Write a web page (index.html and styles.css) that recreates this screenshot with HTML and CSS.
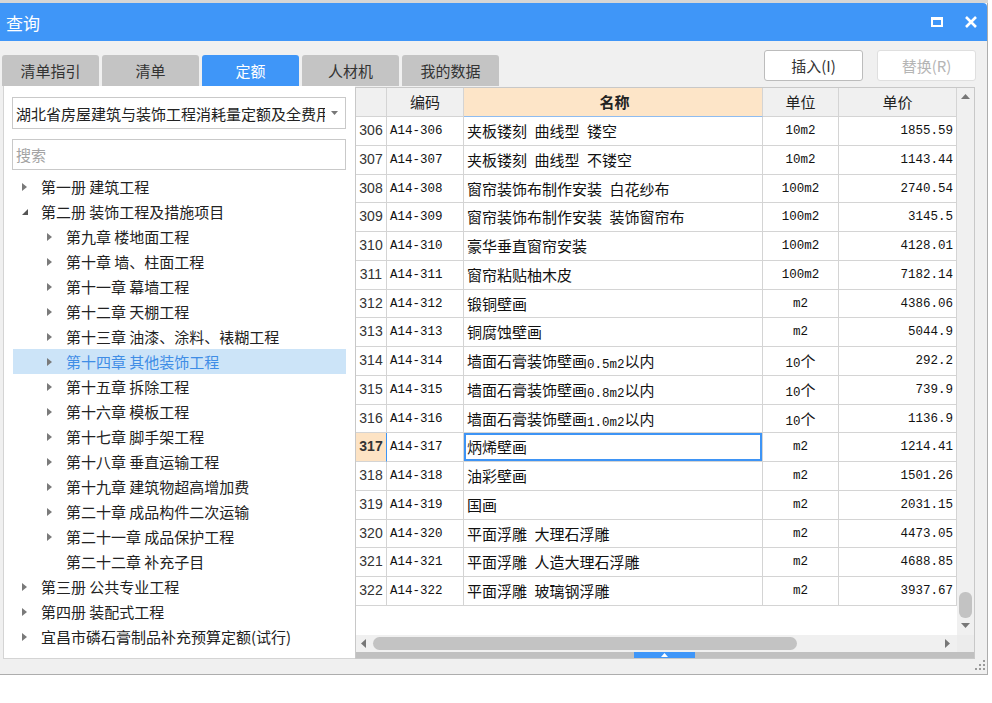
FILE: index.html
```html
<!DOCTYPE html>
<html lang="zh-CN">
<head>
<meta charset="utf-8">
<title>查询</title>
<link rel="stylesheet" href="styles.css">
</head>
<body>
<div class="topstrip"></div>
<div class="dialog">
  <div class="titlebar">
    <span class="title">查询</span>
    <div class="tb-icons">
      <svg width="12" height="10" viewBox="0 0 12 10"><rect x="1" y="1.5" width="10" height="7.5" fill="none" stroke="#fff" stroke-width="2"/><rect x="0" y="0" width="12" height="3" fill="#fff"/></svg>
      <svg width="12" height="12" viewBox="0 0 12 12"><path d="M1 1L11 11M11 1L1 11" stroke="#fff" stroke-width="2.6"/></svg>
    </div>
  </div>
  <div class="body">
    <div class="toprow">
      <div class="tabs">
        <div class="tab">清单指引</div>
        <div class="tab">清单</div>
        <div class="tab active">定额</div>
        <div class="tab">人材机</div>
        <div class="tab">我的数据</div>
      </div>
      <div class="btns">
        <button class="btn">插入(I)</button>
        <button class="btn disabled">替换(R)</button>
      </div>
    </div>
    <div class="content">
      <div class="left">
        <div class="combo">
          <span class="combo-text">湖北省房屋建筑与装饰工程消耗量定额及全费用基价表</span>
          <svg class="combo-arr" width="7" height="4" viewBox="0 0 7 4"><path d="M0 0H7L3.5 4Z" fill="#777"/></svg>
        </div>
        <div class="search">搜索</div>
        <div class="tree">
          <div class="row l0"><span class="arr"><svg width="5" height="8" viewBox="0 0 5 8"><path d="M0 0L5 4L0 8Z" fill="#7a7a7a"/></svg></span>第一册 建筑工程</div>
          <div class="row l0"><span class="arr"><svg width="6" height="6" viewBox="0 0 6 6"><path d="M6 0V6H0Z" fill="#555"/></svg></span>第二册 装饰工程及措施项目</div>
          <div class="row l1"><span class="arr"><svg width="5" height="8" viewBox="0 0 5 8"><path d="M0 0L5 4L0 8Z" fill="#7a7a7a"/></svg></span>第九章 楼地面工程</div>
          <div class="row l1"><span class="arr"><svg width="5" height="8" viewBox="0 0 5 8"><path d="M0 0L5 4L0 8Z" fill="#7a7a7a"/></svg></span>第十章 墙、柱面工程</div>
          <div class="row l1"><span class="arr"><svg width="5" height="8" viewBox="0 0 5 8"><path d="M0 0L5 4L0 8Z" fill="#7a7a7a"/></svg></span>第十一章 幕墙工程</div>
          <div class="row l1"><span class="arr"><svg width="5" height="8" viewBox="0 0 5 8"><path d="M0 0L5 4L0 8Z" fill="#7a7a7a"/></svg></span>第十二章 天棚工程</div>
          <div class="row l1"><span class="arr"><svg width="5" height="8" viewBox="0 0 5 8"><path d="M0 0L5 4L0 8Z" fill="#7a7a7a"/></svg></span>第十三章 油漆、涂料、裱糊工程</div>
          <div class="row l1 sel"><span class="arr"><svg width="5" height="8" viewBox="0 0 5 8"><path d="M0 0L5 4L0 8Z" fill="#7a7a7a"/></svg></span>第十四章 其他装饰工程</div>
          <div class="row l1"><span class="arr"><svg width="5" height="8" viewBox="0 0 5 8"><path d="M0 0L5 4L0 8Z" fill="#7a7a7a"/></svg></span>第十五章 拆除工程</div>
          <div class="row l1"><span class="arr"><svg width="5" height="8" viewBox="0 0 5 8"><path d="M0 0L5 4L0 8Z" fill="#7a7a7a"/></svg></span>第十六章 模板工程</div>
          <div class="row l1"><span class="arr"><svg width="5" height="8" viewBox="0 0 5 8"><path d="M0 0L5 4L0 8Z" fill="#7a7a7a"/></svg></span>第十七章 脚手架工程</div>
          <div class="row l1"><span class="arr"><svg width="5" height="8" viewBox="0 0 5 8"><path d="M0 0L5 4L0 8Z" fill="#7a7a7a"/></svg></span>第十八章 垂直运输工程</div>
          <div class="row l1"><span class="arr"><svg width="5" height="8" viewBox="0 0 5 8"><path d="M0 0L5 4L0 8Z" fill="#7a7a7a"/></svg></span>第十九章 建筑物超高增加费</div>
          <div class="row l1"><span class="arr"><svg width="5" height="8" viewBox="0 0 5 8"><path d="M0 0L5 4L0 8Z" fill="#7a7a7a"/></svg></span>第二十章 成品构件二次运输</div>
          <div class="row l1"><span class="arr"><svg width="5" height="8" viewBox="0 0 5 8"><path d="M0 0L5 4L0 8Z" fill="#7a7a7a"/></svg></span>第二十一章 成品保护工程</div>
          <div class="row l1"><span class="arr"></span>第二十二章 补充子目</div>
          <div class="row l0"><span class="arr"><svg width="5" height="8" viewBox="0 0 5 8"><path d="M0 0L5 4L0 8Z" fill="#7a7a7a"/></svg></span>第三册 公共专业工程</div>
          <div class="row l0"><span class="arr"><svg width="5" height="8" viewBox="0 0 5 8"><path d="M0 0L5 4L0 8Z" fill="#7a7a7a"/></svg></span>第四册 装配式工程</div>
          <div class="row l0"><span class="arr"><svg width="5" height="8" viewBox="0 0 5 8"><path d="M0 0L5 4L0 8Z" fill="#7a7a7a"/></svg></span>宜昌市磷石膏制品补充预算定额(试行)</div>
        </div>
      </div>
      <div class="right">
        <div class="gridwrap">
          <div class="grid">
            <div class="hrow">
              <div class="c c-num"></div>
              <div class="c c-code h">编码</div>
              <div class="c c-name h sort">名称</div>
              <div class="c c-unit h">单位</div>
              <div class="c c-price h">单价</div>
            </div>
            <div class="drow"><div class="c c-num">306</div><div class="c c-code">A14-306</div><div class="c c-name">夹板镂刻&ensp;曲线型&ensp;镂空</div><div class="c c-unit">10m2</div><div class="c c-price">1855.59</div></div>
            <div class="drow"><div class="c c-num">307</div><div class="c c-code">A14-307</div><div class="c c-name">夹板镂刻&ensp;曲线型&ensp;不镂空</div><div class="c c-unit">10m2</div><div class="c c-price">1143.44</div></div>
            <div class="drow"><div class="c c-num">308</div><div class="c c-code">A14-308</div><div class="c c-name">窗帘装饰布制作安装&ensp;白花纱布</div><div class="c c-unit">100m2</div><div class="c c-price">2740.54</div></div>
            <div class="drow"><div class="c c-num">309</div><div class="c c-code">A14-309</div><div class="c c-name">窗帘装饰布制作安装&ensp;装饰窗帘布</div><div class="c c-unit">100m2</div><div class="c c-price">3145.5</div></div>
            <div class="drow"><div class="c c-num">310</div><div class="c c-code">A14-310</div><div class="c c-name">豪华垂直窗帘安装</div><div class="c c-unit">100m2</div><div class="c c-price">4128.01</div></div>
            <div class="drow"><div class="c c-num">311</div><div class="c c-code">A14-311</div><div class="c c-name">窗帘粘贴柚木皮</div><div class="c c-unit">100m2</div><div class="c c-price">7182.14</div></div>
            <div class="drow"><div class="c c-num">312</div><div class="c c-code">A14-312</div><div class="c c-name">锻铜壁画</div><div class="c c-unit">m2</div><div class="c c-price">4386.06</div></div>
            <div class="drow"><div class="c c-num">313</div><div class="c c-code">A14-313</div><div class="c c-name">铜腐蚀壁画</div><div class="c c-unit">m2</div><div class="c c-price">5044.9</div></div>
            <div class="drow"><div class="c c-num">314</div><div class="c c-code">A14-314</div><div class="c c-name">墙面石膏装饰壁画<span class="n">0.5m2</span>以内</div><div class="c c-unit">10<span class="cj">个</span></div><div class="c c-price">292.2</div></div>
            <div class="drow"><div class="c c-num">315</div><div class="c c-code">A14-315</div><div class="c c-name">墙面石膏装饰壁画<span class="n">0.8m2</span>以内</div><div class="c c-unit">10<span class="cj">个</span></div><div class="c c-price">739.9</div></div>
            <div class="drow"><div class="c c-num">316</div><div class="c c-code">A14-316</div><div class="c c-name">墙面石膏装饰壁画<span class="n">1.0m2</span>以内</div><div class="c c-unit">10<span class="cj">个</span></div><div class="c c-price">1136.9</div></div>
            <div class="drow cur"><div class="c c-num">317</div><div class="c c-code">A14-317</div><div class="c c-name selcell">炳烯壁画</div><div class="c c-unit">m2</div><div class="c c-price">1214.41</div></div>
            <div class="drow"><div class="c c-num">318</div><div class="c c-code">A14-318</div><div class="c c-name">油彩壁画</div><div class="c c-unit">m2</div><div class="c c-price">1501.26</div></div>
            <div class="drow"><div class="c c-num">319</div><div class="c c-code">A14-319</div><div class="c c-name">国画</div><div class="c c-unit">m2</div><div class="c c-price">2031.15</div></div>
            <div class="drow"><div class="c c-num">320</div><div class="c c-code">A14-320</div><div class="c c-name">平面浮雕&ensp;大理石浮雕</div><div class="c c-unit">m2</div><div class="c c-price">4473.05</div></div>
            <div class="drow"><div class="c c-num">321</div><div class="c c-code">A14-321</div><div class="c c-name">平面浮雕&ensp;人造大理石浮雕</div><div class="c c-unit">m2</div><div class="c c-price">4688.85</div></div>
            <div class="drow"><div class="c c-num">322</div><div class="c c-code">A14-322</div><div class="c c-name">平面浮雕&ensp;玻璃钢浮雕</div><div class="c c-unit">m2</div><div class="c c-price">3937.67</div></div>
          </div>
          <div class="vscroll">
            <svg width="9" height="5" viewBox="0 0 9 5"><path d="M0 5L4.5 0L9 5Z" fill="#777"/></svg>
            <div class="vspace"></div>
            <div class="vthumb"></div>
            <svg width="9" height="5" viewBox="0 0 9 5"><path d="M0 0L4.5 5L9 0Z" fill="#777"/></svg>
          </div>
        </div>
        <div class="hscroll">
          <div class="htrack">
            <svg width="5" height="9" viewBox="0 0 5 9"><path d="M5 0L0 4.5L5 9Z" fill="#777"/></svg>
            <div class="hthumb"></div>
            <div class="hspace"></div>
            <svg width="5" height="9" viewBox="0 0 5 9"><path d="M0 0L5 4.5L0 9Z" fill="#777"/></svg>
          </div>
          <div class="corner"></div>
        </div>
        <div class="strip">
          <div class="strip-blue"><svg width="7" height="4" viewBox="0 0 7 4"><path d="M0 4L3.5 0L7 4Z" fill="#fff"/></svg></div>
        </div>
      </div>
    </div>
    <div class="footer">
      <svg width="10" height="10" viewBox="0 0 10 10"><g fill="#9a9a9a"><rect x="8" y="0" width="2" height="2"/><rect x="4" y="4" width="2" height="2"/><rect x="8" y="4" width="2" height="2"/><rect x="0" y="8" width="2" height="2"/><rect x="4" y="8" width="2" height="2"/><rect x="8" y="8" width="2" height="2"/></g></svg>
    </div>
  </div>
</div>
</body>
</html>
```
FILE: styles.css
```css
* { box-sizing: border-box; }
html, body { margin: 0; padding: 0; }
body {
  width: 992px;
  height: 703px;
  overflow: hidden;
  background: #fff;
  font-family: "Noto Sans CJK SC", "Liberation Sans", sans-serif;
  color: #222;
}
.topstrip { height: 3px; width: 988px; background: #d6d6d6; }
.dialog {
  width: 988px;
  border-right: 1px solid #adadad;
  border-bottom: 1px solid #adadad;
}
.titlebar {
  height: 38px;
  background: #3f96f8;
  display: flex;
  align-items: center;
  justify-content: space-between;
  padding: 0 10px 0 6px;
  border-radius: 0 4px 0 0;
}
.title { color: #fff; font-size: 17px; }
.tb-icons { display: flex; align-items: center; gap: 22px; }
.tb-icons svg { display: block; }

.body { background: #f0f0f0; height: 633px; padding-top: 9px; }
.toprow {
  display: flex;
  justify-content: space-between;
  height: 36px;
  padding: 0 11px 0 2px;
}
.tabs { display: flex; gap: 3px; align-self: flex-end; }
.tab {
  width: 97px;
  height: 31px;
  background: #c4c4c4;
  border-radius: 3px 3px 0 0;
  display: flex;
  align-items: center;
  justify-content: center;
  font-size: 15px;
  color: #333;
}
.tab.active { background: #3f96f8; color: #fff; }
.btns { display: flex; gap: 14px; align-self: flex-start; }
.btn {
  width: 99px;
  height: 31px;
  background: #fff;
  border: 1px solid #bcbcbc;
  border-radius: 3px;
  font-family: "Noto Sans CJK SC", "Liberation Sans", sans-serif;
  font-size: 15px;
  color: #333;
  padding: 0;
}
.btn.disabled { border-color: #dfdfdf; color: #b5b5b5; }

.content { display: flex; margin-left: 3px; height: 573px; }
.left {
  width: 352px;
  background: #fff;
  border-left: 1px solid #d4d4d4;
  border-bottom: 1px solid #d4d4d4;
  padding: 11px 9px 0 8px;
}
.combo {
  height: 32px;
  border: 1px solid #c9c9c9;
  display: flex;
  align-items: center;
  padding: 0 7px 0 3px;
  font-size: 15px;
}
.combo-text { width: 309px; overflow: hidden; white-space: nowrap; color: #222; }
.combo-arr { margin-left: auto; }
.search {
  margin-top: 10px;
  height: 31px;
  border: 1px solid #c9c9c9;
  padding-left: 3px;
  display: flex;
  align-items: center;
  font-size: 15px;
  color: #a3a3a3;
}
.tree { margin: 4px 0 0 1px; }
.row {
  height: 25px;
  display: flex;
  align-items: center;
  font-size: 15px;
  color: #222;
  white-space: nowrap;
}
.row.l0 { padding-left: 9px; }
.row.l1 { padding-left: 34px; }
.arr { width: 19px; display: flex; align-items: center; }
.arr svg { display: block; }
.row.sel { background: #cce4f8; color: #3f8de6; }

.right {
  width: 620px;
  margin-top: 1px;
  border: 1px solid #c8c8c8;
  background: #fff;
  display: flex;
  flex-direction: column;
}
.gridwrap { display: flex; height: 547px; }
.grid { width: 601px; }
.hrow { display: flex; height: 29px; background: #f0f0f0; }
.drow { display: flex; height: 28.75px; background: #fff; }
.c {
  border-right: 1px solid #d4d4d4;
  border-bottom: 1px solid #d4d4d4;
  white-space: nowrap;
  overflow: hidden;
  line-height: 27.5px;
}
.hrow .c { line-height: 28px; }
.c.h { text-align: center; font-size: 15px; color: #222; }
.c.h.sort { background: #fde5c8; font-weight: bold; border-bottom-color: #8fbcf0; }
.c-num {
  width: 31px;
  text-align: center;
  font-family: "Liberation Sans", sans-serif;
  font-size: 14px;
  color: #333;
}
.hrow .c-num { background: #f0f0f0; }
.c-code {
  width: 77px;
  padding: 1px 0 0 3px;
  line-height: 26.5px;
  font-family: "Liberation Mono", "Noto Sans CJK SC", monospace;
  font-size: 12.5px;
  color: #111;
}
.c-name {
  width: 299px;
  padding-left: 3px;
  font-size: 15px;
  color: #111;
}
.c-unit {
  width: 76px;
  text-align: center;
  padding-top: 1px;
  line-height: 26.5px;
  font-family: "Liberation Mono", "Noto Sans CJK SC", monospace;
  font-size: 12.5px;
  color: #111;
}
.c-price {
  width: 118px;
  text-align: right;
  padding: 1px 3px 0 0;
  line-height: 26.5px;
  font-family: "Liberation Mono", monospace;
  font-size: 12.5px;
  color: #111;
}
.hrow .c-code, .hrow .c-unit, .hrow .c-price {
  font-family: "Noto Sans CJK SC", sans-serif;
  font-size: 15px;
  padding: 0;
  line-height: 28px;
  text-align: center;
}
.n { font-family: "Liberation Mono", monospace; font-size: 12.5px; vertical-align: -1px; }
.cj { font-family: "Noto Sans CJK SC", sans-serif; font-size: 15px; }
.drow.cur .c-num {
  background: #fde3c4;
  font-weight: bold;
  border-right-color: #3e94f5;
}
.selcell { box-shadow: inset 0 0 0 2px #3e94f5; }

.vscroll {
  width: 17px;
  background: #f0f0f0;
  display: flex;
  flex-direction: column;
  align-items: center;
  padding: 6px 0 7px;
}
.vscroll svg { display: block; }
.vspace { flex: 1; }
.vthumb {
  width: 13px;
  height: 26px;
  border-radius: 6px;
  background: #c3c3c3;
  margin-bottom: 5px;
}
.hscroll { display: flex; height: 17px; background: #f0f0f0; }
.htrack {
  width: 601px;
  display: flex;
  align-items: center;
  padding: 0 7px 0 5px;
}
.htrack svg { display: block; }
.hthumb {
  width: 424px;
  height: 13px;
  border-radius: 7px;
  background: #c3c3c3;
  margin-left: 7px;
}
.hspace { flex: 1; }
.corner { width: 17px; background: #ececec; }
.strip { height: 6px; background: #c0c0c0; padding-left: 278px; }
.strip-blue {
  width: 61px;
  height: 6px;
  background: #3f96f8;
  display: flex;
  justify-content: center;
  align-items: center;
}
.strip-blue svg { display: block; }
.footer {
  height: 15px;
  display: flex;
  justify-content: flex-end;
  align-items: flex-end;
  padding: 0 2px 4px 0;
}
.footer svg { display: block; }
```
